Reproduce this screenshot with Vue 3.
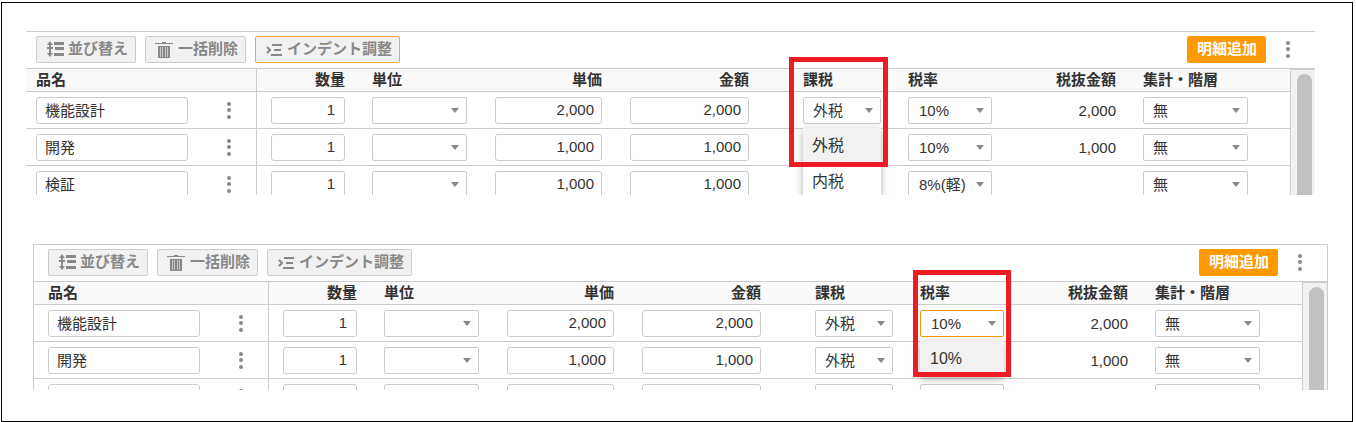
<script setup>
const more = [4, 10, 17]

const panels = [
  {
    id: 'tax',
    indentActive: true,
    menu: { column: 'tax', options: ['外税', '内税'] },
    rows: [
      { name: '機能設計', qty: '1', price: '2,000', amount: '2,000', tax: '外税', rate: '10%', net: '2,000', level: '無' },
      { name: '開発', qty: '1', price: '1,000', amount: '1,000', tax: '外税', rate: '10%', net: '1,000', level: '無' },
      { name: '検証', qty: '1', price: '1,000', amount: '1,000', tax: '外税', rate: '8%(軽)', net: '', level: '無' },
    ],
  },
  {
    id: 'rate',
    indentActive: false,
    menu: { column: 'rate', options: ['10%'] },
    rows: [
      { name: '機能設計', qty: '1', price: '2,000', amount: '2,000', tax: '外税', rate: '10%', net: '2,000', level: '無' },
      { name: '開発', qty: '1', price: '1,000', amount: '1,000', tax: '外税', rate: '10%', net: '1,000', level: '無' },
      { name: '', qty: '', price: '', amount: '', tax: '', rate: '', net: '', level: '' },
    ],
  },
]

const columns = [
  { key: 'qty', label: '数量', type: 'number' },
  { key: 'unit', label: '単位', type: 'select' },
  { key: 'price', label: '単価', type: 'number' },
  { key: 'amount', label: '金額', type: 'number' },
  { key: 'tax', label: '課税', type: 'select' },
  { key: 'rate', label: '税率', type: 'select' },
  { key: 'net', label: '税抜金額', type: 'text' },
  { key: 'level', label: '集計・階層', type: 'select' },
]
</script>

<template>
  <div class="page">
    <main class="frame">
      <section v-for="panel in panels" :key="panel.id" class="panel" :class="'panel-' + panel.id">
        <div class="toolbar">
          <button type="button" class="tool">
            <svg width="18" height="17" viewBox="0 0 18 17" aria-hidden="true">
              <path d="M4 0 7 4H5v2h2v2H5v4h2l-3 4-3-4h2V8H1V6h2V4H1z" />
              <path d="M8 1h10v3H8zM9 6h9v3H9zM8 12h10v3H8z" />
            </svg>
            <span>並び替え</span>
          </button>
          <button type="button" class="tool trash">
            <svg width="18" height="17" viewBox="0 0 18 17" aria-hidden="true">
              <path d="M0 2h7V1h4v1h7v1H0z" />
              <path d="M3 5h12v12H3z" />
              <path d="M5.500 6v10M7.500 6v10M10.500 6v10M12.500 6v10" class="slits" />
            </svg>
            <span>一括削除</span>
          </button>
          <button type="button" class="tool" :class="{ active: panel.indentActive }">
            <svg width="18" height="17" viewBox="0 0 18 17" aria-hidden="true">
              <path d="M2 6l3 3-3 3" class="chevron" />
              <path d="M7 3h10v2H7zM9 8h7v2H9zM6 13h11v2H6z" />
            </svg>
            <span>インデント調整</span>
          </button>
          <button type="button" class="add">明細追加</button>
          <button type="button" class="more" aria-label="メニュー">
            <svg width="6" height="22" viewBox="0 0 6 22" aria-hidden="true">
              <circle v-for="y in more" :key="y" cx="3" :cy="y" r="2" />
            </svg>
          </button>
        </div>

        <div class="body">
          <table>
            <colgroup>
              <col class="c-name" />
              <col v-for="c in columns" :key="c.key" :class="'c-' + c.key" />
            </colgroup>
            <thead>
              <tr>
                <th scope="col" class="name">品名</th>
                <th v-for="c in columns" :key="c.key" scope="col" :class="[c.key, c.type]">{{ c.label }}</th>
              </tr>
            </thead>
            <tbody>
              <tr v-for="(row, i) in panel.rows" :key="i">
                <td class="name">
                  <div class="name-cell">
                    <input type="text" :value="row.name" aria-label="品名" />
                    <button type="button" class="more" aria-label="行メニュー">
                      <svg width="6" height="22" viewBox="0 0 6 22" aria-hidden="true">
                        <circle v-for="y in more" :key="y" cx="3" :cy="y" r="2" />
                      </svg>
                    </button>
                  </div>
                </td>
                <td v-for="c in columns" :key="c.key" :class="[c.key, c.type]">
                  <input v-if="c.type === 'number'" type="text" :value="row[c.key]" :aria-label="c.label" />
                  <div v-else-if="c.type === 'select'" class="picker">
                    <select
                      :aria-label="c.label"
                      :class="{ focused: panel.id === 'rate' && c.key === 'rate' && i === 0 }"
                    >
                      <option>{{ row[c.key] }}</option>
                    </select>
                    <ul v-if="i === 0 && panel.menu.column === c.key" class="menu" role="listbox" :aria-label="c.label">
                      <li
                        v-for="(o, n) in panel.menu.options"
                        :key="o"
                        role="option"
                        :aria-selected="n === 0"
                      >{{ o }}</li>
                    </ul>
                  </div>
                  <template v-else>{{ row[c.key] }}</template>
                </td>
              </tr>
            </tbody>
          </table>
          <div class="track"><div class="thumb"></div></div>
        </div>
        <div class="marker"></div>
      </section>
    </main>
  </div>
</template>

<style scoped>
.page {
  padding: 2px 3px 0 1px;
  color: #333;
  font: 15px/20px "Liberation Sans", "Noto Sans CJK JP", sans-serif;
}
.frame {
  border: 1px solid #000;
  background: #fff;
  padding: 28px 0 31px;
}
.panel {
  position: relative;
  border-top: 1px solid #ccc;
}
.panel-tax {
  --inset: 10px;
  --name-width: 231px;
  --body-height: 126px;
  margin: 0 37px 49px 24px;
}
.panel-rate {
  --inset: 14px;
  --name-width: 235px;
  --body-height: 108px;
  margin: 0 24px 0 31px;
  border-left: 1px solid #ccc;
  border-right: 1px solid #ccc;
}
button,
input,
select {
  font: inherit;
  color: inherit;
  margin: 0;
  box-sizing: border-box;
}
.toolbar {
  display: flex;
  gap: 9px;
  padding: 4px 17px 5px var(--inset);
  border-bottom: 1px solid #ccc;
}
.tool {
  display: flex;
  align-items: center;
  gap: 4px;
  height: 27px;
  padding: 0 7px 0 9px;
  border: 1px solid #ccc;
  border-radius: 2px;
  background: #f1f1f1;
  color: #888;
  font-weight: bold;
}
.tool span {
  line-height: 24px;
  padding-bottom: 2px;
}
.tool.trash {
  gap: 5px;
}
.tool.active {
  border-color: #f5a836;
}
.tool svg {
  fill: #888;
}
.tool .slits {
  fill: none;
  stroke: #c8c8c8;
  stroke-width: 1;
}
.tool .chevron {
  fill: none;
  stroke: #888;
  stroke-width: 2;
}
.add {
  height: 27px;
  margin-left: auto;
  padding: 0 9px 2px 10px;
  border: 0;
  border-radius: 2px;
  background: #f90;
  color: #fff;
  font-weight: bold;
}
.more {
  display: flex;
  align-items: center;
  justify-content: center;
  width: 20px;
  height: 27px;
  padding: 0;
  border: 0;
  background: none;
}
.toolbar .more {
  margin-left: 3px;
}
.more svg {
  fill: #888;
}
.body {
  display: flex;
  max-height: var(--body-height);
  overflow: hidden;
}
table {
  flex: 1;
  width: 100%;
  table-layout: fixed;
  border-collapse: separate;
  border-spacing: 0;
}
.c-name { width: var(--name-width); }
.c-qty { width: 101px; }
.c-unit { width: 123px; }
.c-price { width: 135px; }
.c-amount { width: 147px; }
.c-tax { width: 131px; }
.c-rate { width: 112px; }
.c-net { width: 123px; }
th,
td {
  box-sizing: border-box;
  padding: 0 14px;
  border-bottom: 1px solid #ccc;
  text-align: left;
  white-space: nowrap;
}
th {
  height: 23px;
  background: #fafafa;
  line-height: 22px;
}
td {
  height: 37px;
  padding-top: 5px;
  padding-bottom: 4px;
  line-height: 26px;
}
.name {
  padding-left: var(--inset);
  border-right: 1px solid #ccc;
}
.number,
.text {
  text-align: right;
}
.qty,
.tax,
.text {
  padding-right: 13px;
}
.tax {
  padding-left: 40px;
}
.name-cell {
  display: flex;
  gap: 31px;
}
input,
select {
  display: block;
  width: 100%;
  height: 27px;
  border: 1px solid #ccc;
  border-radius: 3px;
  background: #fff;
  outline: 0;
}
input {
  padding: 0 8px 2px;
}
.name-cell input {
  width: 152px;
}
.number input {
  padding-right: 7px;
  text-align: right;
}
.qty input {
  padding-right: 9px;
}
.picker {
  position: relative;
}
.picker::after {
  content: "";
  position: absolute;
  top: 11px;
  right: 8px;
  border: 4px solid transparent;
  border-top: 5px solid #888;
  border-bottom: 0;
  pointer-events: none;
}
.level .picker {
  width: 105px;
}
select {
  appearance: none;
  padding: 0 9px 1px;
  border-radius: 2px;
}
.rate select {
  padding-left: 10px;
  padding-right: 0;
}
select.focused {
  border-color: #f90;
}
.menu {
  position: absolute;
  z-index: 1;
  top: 31px;
  left: 0;
  right: 0;
  margin: 0;
  padding: 0;
  list-style: none;
  background: #fff;
  box-shadow: 0 2px 8px rgba(0, 0, 0, 0.3);
  font-size: 16px;
  line-height: 36px;
}
.menu li {
  padding: 0 9px;
}
.rate .menu li {
  padding-left: 10px;
}
.menu li[aria-selected="true"] {
  background: #f1f1f1;
}
.track {
  box-sizing: border-box;
  flex: none;
  width: 25px;
  padding: 4px 3px 0 6px;
  border-left: 1px solid #ccc;
  border-top: 1px solid #ccc;
  background: #f1f1f1;
}
.thumb {
  height: 100%;
  border-radius: 8px 8px 0 0;
  background: #c1c1c1;
}
.marker {
  position: absolute;
  z-index: 2;
  box-sizing: border-box;
  border: 5px solid #ed1c24;
  pointer-events: none;
}
.panel-tax .marker {
  top: 25px;
  left: 763px;
  width: 99px;
  height: 110px;
}
.panel-rate .marker {
  top: 25px;
  left: 879px;
  width: 98px;
  height: 107px;
}
</style>

<style>
body {
  background: #fff;
}
</style>
